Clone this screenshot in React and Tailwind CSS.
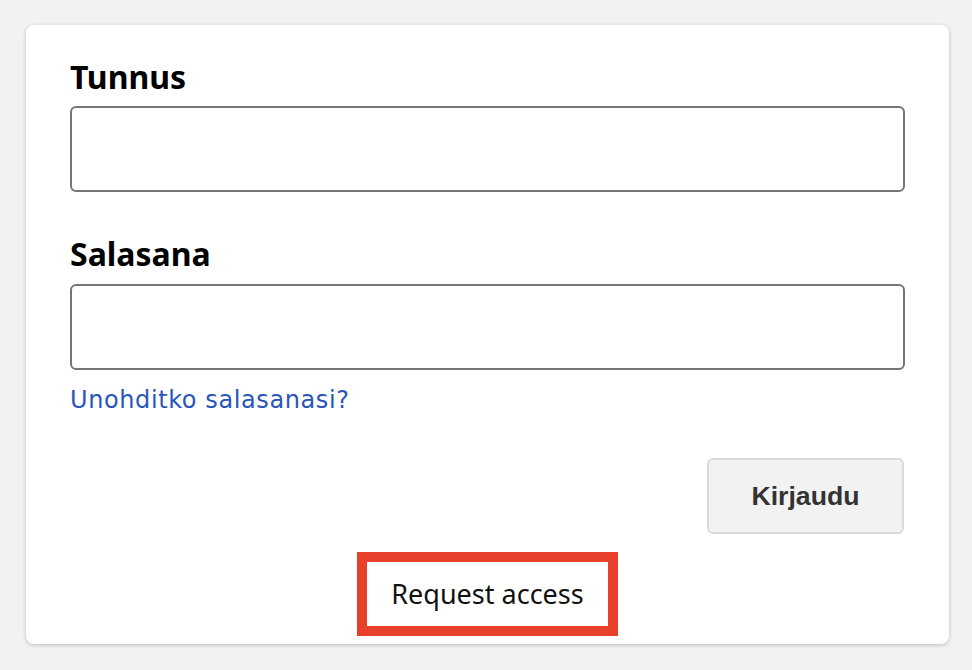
import React, { useState } from 'react';

export default function App() {
  const [username, setUsername] = useState('');
  const [password, setPassword] = useState('');

  return (
    <div className="min-h-[670px] bg-[#f2f2f2] pt-[25px] pl-[26px]">
      <form
        className="w-[923px] h-[619px] bg-white rounded-[8px] shadow-[0_1px_4px_rgba(0,0,0,0.22)] px-[44px] pt-[30px] pb-[8px] flex flex-col"
        onSubmit={(e) => e.preventDefault()}
      >
        <label
          htmlFor="username"
          className="font-['Noto_Sans',sans-serif] font-bold text-[32px] leading-[44px] text-black mb-[7px]"
        >
          Tunnus
        </label>
        <input
          id="username"
          type="text"
          value={username}
          onChange={(e) => setUsername(e.target.value)}
          className="h-[86px] w-full border-2 border-[#767676] rounded-[6px] px-4 text-[26px] outline-none"
        />

        <label
          htmlFor="password"
          className="mt-[40px] font-['Noto_Sans',sans-serif] font-bold text-[32px] leading-[44px] text-black mb-[8px]"
        >
          Salasana
        </label>
        <input
          id="password"
          type="password"
          value={password}
          onChange={(e) => setPassword(e.target.value)}
          className="h-[86px] w-full border-2 border-[#767676] rounded-[6px] px-4 text-[26px] outline-none"
        />

        <a
          href="#"
          className="mt-[15px] self-start font-['DejaVu_Sans',sans-serif] text-[24px] leading-[30px] tracking-[0.6px] text-[#2a56b9]"
        >
          Unohditko salasanasi?
        </a>

        <div className="mt-[43px] flex justify-end pr-px">
          <button
            type="submit"
            className="w-[197px] h-[76px] bg-[#f2f2f2] border-2 border-[#dadada] rounded-[6px] font-['Liberation_Sans',Arial,sans-serif] font-bold text-[26.67px] text-[#333333]"
          >
            Kirjaudu
          </button>
        </div>

        <div className="mt-[18px] flex justify-center">
          <button
            type="button"
            className="w-[261px] h-[84px] border-[10px] border-[#e8402a] bg-white flex items-center justify-center font-['Noto_Sans',sans-serif] text-[27px] text-[#111111]"
          >
            Request access
          </button>
        </div>
      </form>
    </div>
  );
}
